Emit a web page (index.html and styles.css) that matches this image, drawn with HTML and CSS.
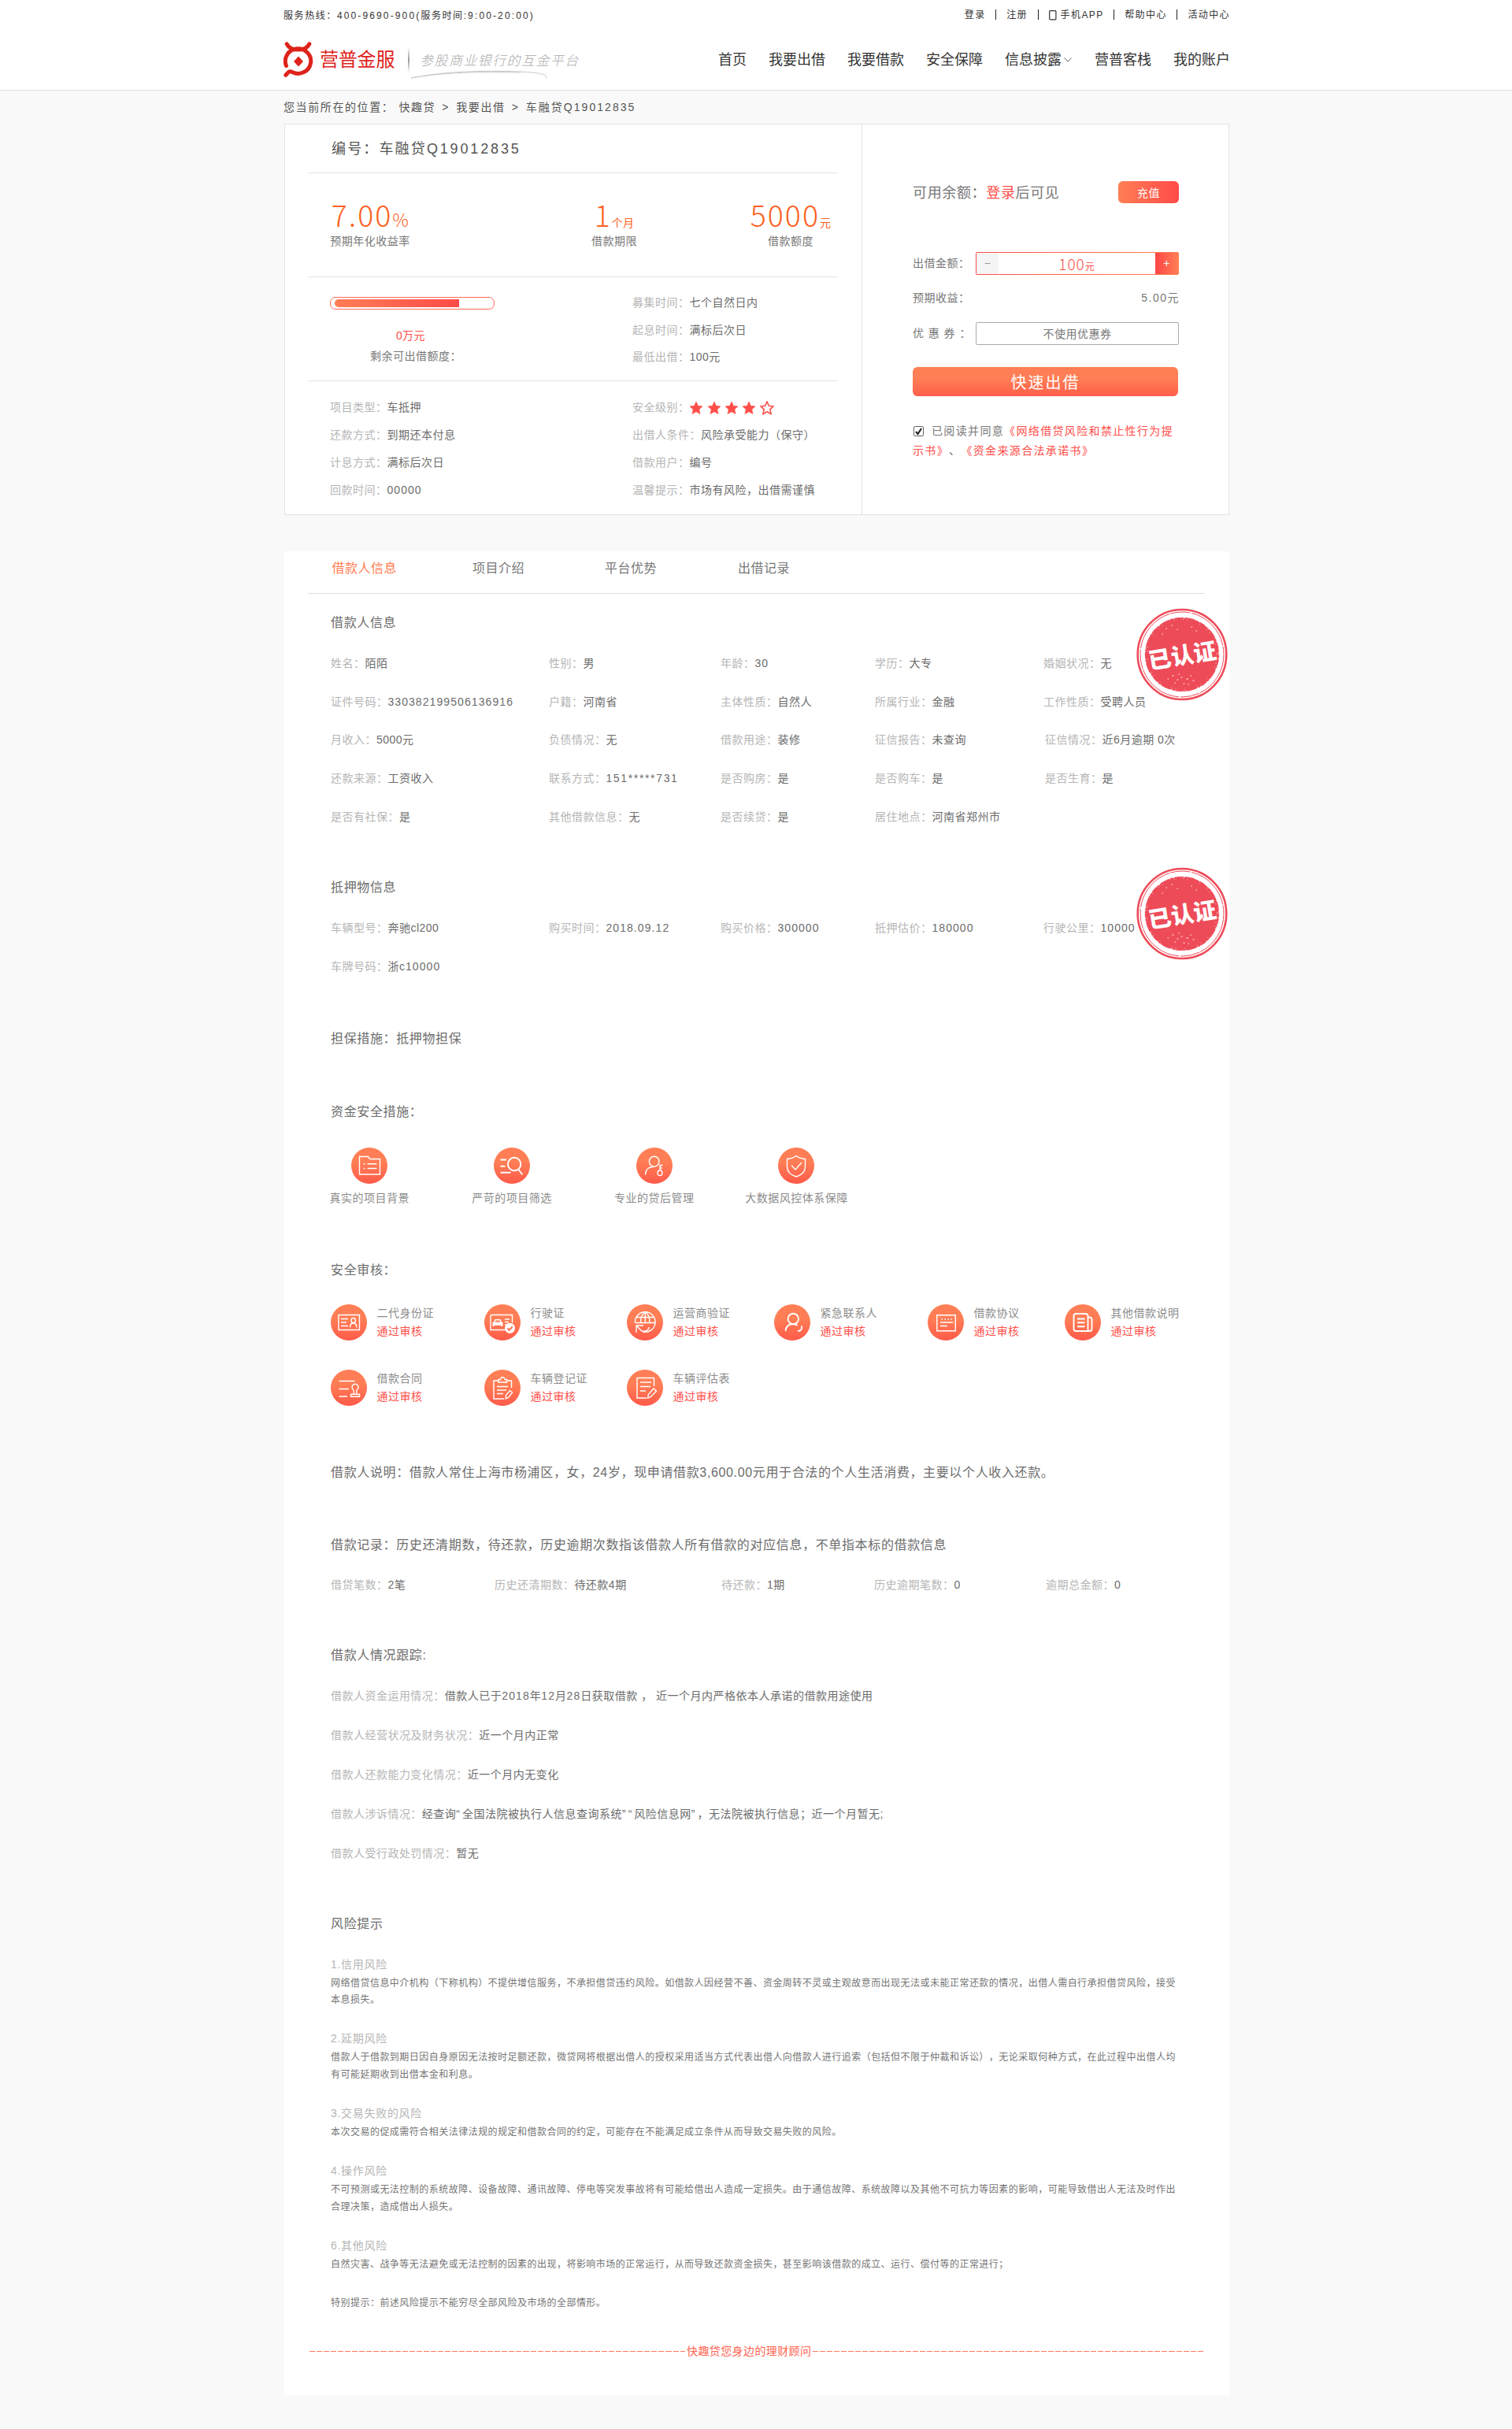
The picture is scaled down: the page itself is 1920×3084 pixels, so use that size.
FILE: index.html
```html
<!DOCTYPE html>
<html lang="zh-CN">
<head>
<meta charset="utf-8">
<title>车融贷Q19012835 - 营普金服</title>
<link rel="stylesheet" href="styles.css">
</head>
<body>
<svg class="defs" width="0" height="0" aria-hidden="true">
  <defs>
    <linearGradient id="disc" x1="0" y1="0" x2="0" y2="1"><stop offset="0.4" stop-color="#ff7e55"/><stop offset="1" stop-color="#ff5a4a"/></linearGradient>
    <symbol id="star" viewBox="0 0 18 18"><path d="M9 1l2.4 5.3 5.6.6-4.2 3.9 1.2 5.8L9 13.7l-5 2.9 1.2-5.8L1 6.9l5.6-.6z"/></symbol>
    <symbol id="stamp" viewBox="0 0 116 118">
      <ellipse cx="58" cy="59" rx="56.3" ry="57" fill="none" stroke="#ee4b59" stroke-width="2.6"/>
      <ellipse cx="58" cy="59" rx="53" ry="54" fill="none" stroke="#ee4b59" stroke-width="1" stroke-dasharray="60 1 25 2"/>
      <circle cx="58" cy="59" r="47.2" fill="#ee4b59"/>
      <g fill="none" stroke="#fff" stroke-linecap="round" stroke-width="1">
        <circle cx="58" cy="59" r="46.8" stroke-dasharray=".5 4 1 9 .5 3 2 14"/>
        <circle cx="58" cy="59" r="44.5" stroke-dasharray=".1 11 .1 5 .1 17" stroke-width=".8"/>
        <path d="M46 86h1M52 91h1M57 88h1M64 90h1.500M69 86h.5M72 92h1M49 95h.5M60 96h1M66 97h.5M40 90h.5M54 84h.5M38 26h.5M45 22h.5M52 27h.5M70 24h.5M76 29h.5M33 33h.5" stroke-width="1.100"/>
      </g>
    </symbol>
  </defs>
</svg>

<header class="header">
  <div class="wrap">
    <div class="topbar">
      <p class="hotline">服务热线：<span>400-9690-900(</span>服务时间<span>:9:00-20:00)</span></p>
      <ul class="toplinks">
        <li>登录</li><li>注册</li>
        <li><svg width="10" height="13" viewBox="0 0 10 13"><rect x=".7" y=".7" width="8.2" height="11.2" rx="1" fill="none" stroke="#333" stroke-width="1.2"/></svg>手机APP</li>
        <li>帮助中心</li><li>活动中心</li>
      </ul>
    </div>
    <div class="mainbar">
      <div class="brand">
        <svg class="logo" width="40" height="46" viewBox="0 0 40 46" fill="none" stroke="#de231b" stroke-width="5">
          <path d="M4.2 2.8C9 12.500 28 12.500 32.800 2.800" stroke-linecap="round"/>
          <path d="M2.800 42.300C6 39.500 7 36 11.500 38.800A16.200 15.800 0 1 0 3.500 30.500" stroke-linecap="round"/>
          <path d="M19 18.500l6 6.500-6 6.500-6-6.500z" fill="#de231b" stroke="none"/>
        </svg>
        <span class="brand-name">营普金服</span>
        <span class="brand-rule"></span>
        <span class="slogan">参股商业银行的互金平台
          <svg width="178" height="12" viewBox="0 0 178 12"><path d="M1 10C40 2 90 0 140 2c26 1 38 5 31 8M1 10C40 3 90 1.500 140 3" fill="none" stroke="#c9c9c9" stroke-width="1"/></svg>
        </span>
      </div>
      <nav class="nav">
        <a>首页</a><a>我要出借</a><a>我要借款</a><a>安全保障</a>
        <a>信息披露<svg width="12" height="8" viewBox="0 0 12 8"><path d="M1.500 1.500l4.500 4.500 4.500-4.500" fill="none" stroke="#666" stroke-width="1"/></svg></a>
        <a>营普客栈</a><a>我的账户</a>
      </nav>
    </div>
  </div>
</header>

<div class="wrap crumbs"><span class="here">您当前所在的位置：</span><span>快趣贷</span><i>&gt;</i><span>我要出借</span><i>&gt;</i><span>车融贷Q19012835</span></div>

<main class="page">
  <section class="card">
    <div class="loan">
      <h1>编号：车融贷<span>Q19012835</span></h1>
      <div class="stats">
        <div class="stat rate"><p class="big">7.00<small class="pct">%</small></p><p>预期年化收益率</p></div>
        <div class="stat term"><p class="big">1<small>个月</small></p><p>借款期限</p></div>
        <div class="stat sum"><p class="big">5000<small>元</small></p><p>借款额度</p></div>
      </div>
      <div class="progress">
        <div>
          <div class="bar"><div class="fill"></div></div>
          <p class="left-sum">0万元</p>
          <p class="left-label">剩余可出借额度：</p>
        </div>
        <dl>
          <div><dt>募集时间：</dt><dd>七个自然日内</dd></div>
          <div><dt>起息时间：</dt><dd>满标后次日</dd></div>
          <div><dt>最低出借：</dt><dd>100元</dd></div>
        </dl>
      </div>
      <dl class="terms">
        <div><dt>项目类型：</dt><dd>车抵押</dd></div>
        <div><dt>安全级别：</dt><dd class="stars"><svg><use href="#star"/></svg><svg><use href="#star"/></svg><svg><use href="#star"/></svg><svg><use href="#star"/></svg><svg class="empty"><use href="#star"/></svg></dd></div>
        <div><dt>还款方式：</dt><dd>到期还本付息</dd></div>
        <div><dt>出借人条件：</dt><dd>风险承受能力（保守）</dd></div>
        <div><dt>计息方式：</dt><dd>满标后次日</dd></div>
        <div><dt>借款用户：</dt><dd>编号</dd></div>
        <div><dt>回款时间：</dt><dd class="num">00000</dd></div>
        <div><dt>温馨提示：</dt><dd>市场有风险，出借需谨慎</dd></div>
      </dl>
    </div>
    <div class="invest">
      <div class="balance"><span>可用余额：<a>登录</a>后可见</span><button class="recharge">充值</button></div>
      <div class="field amount"><label>出借金额：</label>
        <div class="stepper"><span class="minus">−</span><span class="value">100<small>元</small></span><span class="plus">+</span></div></div>
      <div class="field income"><label>预期收益：</label><span>5.00元</span></div>
      <div class="field coupon"><label>优惠券：</label><div class="select">不使用优惠券</div></div>
      <button class="submit">快速出借</button>
      <p class="agree"><svg width="13" height="13" viewBox="0 0 13 13"><rect x=".5" y=".5" width="12" height="12" rx="1.500" fill="#fff" stroke="#666"/><path d="M3 7l2.500 3L10 3" fill="none" stroke="#222" stroke-width="2.200"/></svg>已阅读并同意<a>《网络借贷风险和禁止性行为提<br>示书》</a>、<a>《资金来源合法承诺书》</a></p>
    </div>
  </section>

  <section class="panel">
    <nav class="tabs"><a class="on">借款人信息</a><a>项目介绍</a><a>平台优势</a><a>出借记录</a></nav>

    <div class="block borrower">
      <h3>借款人信息</h3>
      <dl class="facts">
        <div><dt>姓名：</dt><dd>陌陌</dd></div><div><dt>性别：</dt><dd>男</dd></div><div><dt>年龄：</dt><dd class="num">30</dd></div><div><dt>学历：</dt><dd>大专</dd></div><div><dt>婚姻状况：</dt><dd>无</dd></div>
        <div><dt>证件号码：</dt><dd class="num">330382199506136916</dd></div><div><dt>户籍：</dt><dd>河南省</dd></div><div><dt>主体性质：</dt><dd>自然人</dd></div><div><dt>所属行业：</dt><dd>金融</dd></div><div><dt>工作性质：</dt><dd>受聘人员</dd></div>
        <div><dt>月收入：</dt><dd>5000元</dd></div><div><dt>负债情况：</dt><dd>无</dd></div><div><dt>借款用途：</dt><dd>装修</dd></div><div><dt>征信报告：</dt><dd>未查询</dd></div><div class="in"><dt>征信情况：</dt><dd>近6月逾期 0次</dd></div>
        <div><dt>还款来源：</dt><dd>工资收入</dd></div><div><dt>联系方式：</dt><dd class="phone">151*****731</dd></div><div><dt>是否购房：</dt><dd>是</dd></div><div><dt>是否购车：</dt><dd>是</dd></div><div class="in"><dt>是否生育：</dt><dd>是</dd></div>
        <div><dt>是否有社保：</dt><dd>是</dd></div><div><dt>其他借款信息：</dt><dd>无</dd></div><div><dt>是否续贷：</dt><dd>是</dd></div><div><dt>居住地点：</dt><dd>河南省郑州市</dd></div>
      </dl>
      <div class="stamp"><svg width="116" height="118"><use href="#stamp"/></svg><b>已认证</b></div>
    </div>

    <div class="block pledge">
      <h3>抵押物信息</h3>
      <dl class="facts">
        <div><dt>车辆型号：</dt><dd>奔驰cl200</dd></div><div><dt>购买时间：</dt><dd class="num">2018.09.12</dd></div><div><dt>购买价格：</dt><dd class="num">300000</dd></div><div><dt>抵押估价：</dt><dd class="num">180000</dd></div><div><dt>行驶公里：</dt><dd class="num">10000</dd></div>
        <div><dt>车牌号码：</dt><dd>浙<span class="num">c10000</span></dd></div>
      </dl>
      <div class="stamp"><svg width="116" height="118"><use href="#stamp"/></svg><b>已认证</b></div>
    </div>

    <div class="block guarantee"><h3>担保措施：抵押物担保</h3></div>

    <div class="block measures">
      <h3>资金安全措施：</h3>
      <ul>
        <li><svg class="ico" viewBox="0 0 46 46"><circle cx="23" cy="23" r="23"/><path d="M10.500 11.500h11l2 3h13v19.500h-26zM20.500 20.700h12M20.500 26.500h12M15.500 20.700h2M15.500 26.500h2"/></svg>真实的项目背景</li>
        <li><svg class="ico bold" viewBox="0 0 46 46"><circle cx="23" cy="23" r="23"/><path d="M31 27.500l5.500 7M8.500 15.500h7.500M8.500 23.700h6M8.500 31.700h13M34.300 21a8.200 8.200 0 1 1-16.400 0a8.200 8.200 0 0 1 16.400 0z"/></svg>严苛的项目筛选</li>
        <li><svg class="ico" viewBox="0 0 46 46"><circle cx="23" cy="23" r="23"/><path d="M29 17.700a6.300 6.500 0 1 1-12.600 0a6.300 6.500 0 0 1 12.600 0zM11.500 34.500c0-6 4-10 11-10.200M30 29v-6.500h3.500M30 26h3M33 32.300a3 3.300 0 1 1-6 0a3 3.300 0 0 1 6 0z"/></svg>专业的贷后管理</li>
        <li><svg class="ico" viewBox="0 0 46 46"><circle cx="23" cy="23" r="23"/><path d="M23 10.500c3 2.500 7 3.600 11.500 4v9.500c0 6.500-5 11-11.500 13-6.500-2-11.500-6.500-11.500-13v-9.500c4.500-.4 8.500-1.500 11.500-4zM17 22.500l5 5.500 8-9"/></svg>大数据风控体系保障</li>
      </ul>
    </div>

    <div class="block audit">
      <h3>安全审核：</h3>
      <ul>
        <li><svg class="ico" viewBox="0 0 46 46"><circle cx="23" cy="23" r="23"/><path d="M10 13.500h26.500v19h-26.500zM13 18.500h9M13 23h7M13 27.500h9M31.500 20.500a2.800 3 0 1 1-5.600 0a2.800 3 0 0 1 5.600 0zM24.500 29.500c0-3.500 1.500-5.500 4.200-5.500s4.200 2 4.200 5.500"/></svg><p>二代身份证<em>通过审核</em></p></li>
        <li><svg class="ico" viewBox="0 0 46 46"><circle cx="23" cy="23" r="23"/><path d="M8 13.500h27.500v10M27 32.500h-19v-19M26 19h6M26 22.500h5M26 26h3"/><path class="solid" d="M13.500 19h7l1.500 3.500 1.500.8v4.700h-2v-1.300h-9v1.300h-2v-4.700l1.500-.8z"/><path class="cut" d="M14.500 20.500h5l.8 2h-6.600z"/><circle class="solid" cx="32.500" cy="30.300" r="6.500"/><path class="tick" d="M29.500 30.500l2.200 2.300 4-4.500"/></svg><p>行驶证<em>通过审核</em></p></li>
        <li><svg class="ico" viewBox="0 0 46 46"><circle cx="23" cy="23" r="23"/><path d="M10.500 23.500a12.800 12.800 0 1 1 10 11.500M11 16.500h24.500M10.500 23.500h26M23.300 9.500v14M23.300 9.500c-5 4-6 9-5.700 14M23.300 9.500c5 4 6 9 5.500 14M12 36v-9h9M12.500 27.500l6.500 6.500c5 1 9-1 9-5"/></svg><p>运营商验证<em>通过审核</em></p></li>
        <li><svg class="ico bold" viewBox="0 0 46 46"><circle cx="23" cy="23" r="23"/><path d="M31 18.500a6.700 6.700 0 1 1-13.400 0a6.700 6.700 0 0 1 13.400 0zM14.500 34c.5-5.500 4-9 9.800-9 2.500 0 4 .8 5.200 2M35 27.500v3q-.500 3.500-5 3.500"/></svg><p>紧急联系人<em>通过审核</em></p></li>
        <li><svg class="ico" viewBox="0 0 46 46"><circle cx="23" cy="23" r="23"/><path d="M11.800 13.700h23.500v20h-23.500zM16 23h16.500M16 27.500h9M17.500 19h1.500M21.500 19h1.500M25.500 19h1.500M29.300 19h1.500"/></svg><p>借款协议<em>通过审核</em></p></li>
        <li><svg class="ico bold" viewBox="0 0 46 46"><circle cx="23" cy="23" r="23"/><path d="M14.500 12h12q3 0 3 3v19h-15q-3 0-3-3v-16q0-3 3-3zM29.500 16.500h2q3 0 3 3v11.500q0 3-3 3h-2M16 18.500h9.500M16 23.300h9.500M16 28.300h9.500"/></svg><p>其他借款说明<em>通过审核</em></p></li>
        <li><svg class="ico" viewBox="0 0 46 46"><circle cx="23" cy="23" r="23"/><path d="M10.500 14.500h20M10.500 24.500h12.500M10.500 34h10.500M25.500 34.300h11v-3h-11zM29 31c1-3 .5-4-.3-5.500a4 4 0 1 1 4.600 0c-.8 1.500-1.300 2.500-.3 5.500"/></svg><p>借款合同<em>通过审核</em></p></li>
        <li><svg class="ico" viewBox="0 0 46 46"><circle cx="23" cy="23" r="23"/><path d="M18 14h-6v23h13M28.500 14h6v9M18 16v-3.500h2.500c.5-4 5-4 5.500 0h2.500v3.500zM16 21.500h14M16 26h12M16 30.500h8M27 37l.5-4.500 5-6 3 2.500-5 6.500z"/></svg><p>车辆登记证<em>通过审核</em></p></li>
        <li><svg class="ico" viewBox="0 0 46 46"><circle cx="23" cy="23" r="23"/><path d="M34.500 21v-10.500h-21.500v25.500h12M17 16h14M17 21.500h13M17 27h7M26.500 36l.8-4.500 6.700-7.500 3.500 3-7 7.500z"/></svg><p>车辆评估表<em>通过审核</em></p></li>
      </ul>
    </div>

    <div class="block note"><h3>借款人说明：借款人常住上海市杨浦区，女，24岁，现申请借款3,600.00元用于合法的个人生活消费，主要以个人收入还款。</h3></div>

    <div class="block record">
      <h3>借款记录：历史还清期数，待还款，历史逾期次数指该借款人所有借款的对应信息，不单指本标的借款信息</h3>
      <dl>
        <div><dt>借贷笔数：</dt><dd>2笔</dd></div><div><dt>历史还清期数：</dt><dd>待还款4期</dd></div><div><dt>待还款：</dt><dd>1期</dd></div><div><dt>历史逾期笔数：</dt><dd>0</dd></div><div><dt>逾期总金额：</dt><dd>0</dd></div>
      </dl>
    </div>

    <div class="block track">
      <h3>借款人情况跟踪:</h3>
      <dl>
        <div><dt>借款人资金运用情况：</dt><dd class="first">借款人已于<span class="num">2018</span>年<span class="num">12</span>月<span class="num">28</span>日获取借款 ， 近一个月内严格依本人承诺的借款用途使用</dd></div>
        <div><dt>借款人经营状况及财务状况：</dt><dd>近一个月内正常</dd></div>
        <div><dt>借款人还款能力变化情况：</dt><dd>近一个月内无变化</dd></div>
        <div><dt>借款人涉诉情况：</dt><dd>经查询<q>“</q>全国法院被执行人信息查询系统<q>”“</q>风险信息网<q>”</q>，无法院被执行信息；近一个月暂无;</dd></div>
        <div><dt>借款人受行政处罚情况：</dt><dd>暂无</dd></div>
      </dl>
    </div>

    <div class="block risk">
      <h3>风险提示</h3>
      <h4>1.信用风险</h4>
      <p>网络借贷信息中介机构（下称机构）不提供增信服务，不承担借贷违约风险。如借款人因经营不善、资金周转不灵或主观故意而出现无法或未能正常还款的情况，出借人需自行承担借贷风险，接受<br>本息损失。</p>
      <h4>2.延期风险</h4>
      <p>借款人于借款到期日因自身原因无法按时足额还款，微贷网将根据出借人的授权采用适当方式代表出借人向借款人进行追索（包括但不限于仲裁和诉讼），无论采取何种方式，在此过程中出借人均<br>有可能延期收到出借本金和利息。</p>
      <h4>3.交易失败的风险</h4>
      <p>本次交易的促成需符合相关法律法规的规定和借款合同的约定，可能存在不能满足成立条件从而导致交易失败的风险。</p>
      <h4>4.操作风险</h4>
      <p>不可预测或无法控制的系统故障、设备故障、通讯故障、停电等突发事故将有可能给借出人造成一定损失。由于通信故障、系统故障以及其他不可抗力等因素的影响，可能导致借出人无法及时作出<br>合理决策，造成借出人损失。</p>
      <h4>6.其他风险</h4>
      <p>自然灾害、战争等无法避免或无法控制的因素的出现，将影响市场的正常运行，从而导致还款资金损失，甚至影响该借款的成立、运行、偿付等的正常进行；</p>
      <p class="special">特别提示：前述风险提示不能穷尽全部风险及市场的全部情形。</p>
    </div>

    <div class="signoff"><i></i><span>快趣贷您身边的理财顾问</span><i></i></div>
  </section>
</main>
</body>
</html>
```

FILE: styles.css
```css
* { box-sizing: border-box; margin: 0; padding: 0; }

body {
  background: #f9f9f9;
  color: #777;
  font: 14px/20px "Liberation Sans", "Noto Sans CJK SC", sans-serif;
  letter-spacing: .5px;
  text-spacing-trim: space-all;
  min-height: 3084px;
  white-space: nowrap;
}
ul { list-style: none; }
em, i { font-style: normal; }
q { quotes: none; letter-spacing: 3px; }
svg { display: block; flex: none; }
button { border: 0; font-family: inherit; color: #fff; }
.defs { position: absolute; }
.wrap { width: 1200px; margin: 0 auto; }

/* header */
.header { height: 115px; background: #fff; border-bottom: 1px solid #dcdcdc; color: #333; }
.topbar { display: flex; justify-content: space-between; height: 39px; line-height: 40px; font-size: 12px; letter-spacing: 1.4px; }
.hotline { letter-spacing: 1.58px; }
.hotline span { letter-spacing: 2.130px; }
.toplinks { display: flex; height: 38px; margin-right: -2px; line-height: 38px; }
.toplinks li { display: flex; align-items: center; gap: 5px; position: relative; margin-left: 26.600px; }
.toplinks li + li::before { content: ""; position: absolute; left: -14px; top: 12px; width: 1px; height: 13px; background: #222; }
.mainbar { display: flex; justify-content: space-between; height: 73px; }
.brand { display: flex; align-items: center; height: 73px; }
.brand-name { margin-left: 6px; font-size: 24px; letter-spacing: -.2px; color: #de231b; }
.brand-rule { width: 2px; height: 32px; margin-left: 17px; background: linear-gradient(#fff, #999 50%, #fff); }
.slogan { position: relative; margin-left: 13px; font: italic 300 17px/24px "Noto Sans CJK SC", sans-serif; letter-spacing: 1.4px; color: #aaa; }
.slogan svg { position: absolute; left: -12px; top: 25px; }
.nav { display: flex; gap: 28px; height: 73px; margin-right: -2px; line-height: 72px; font-size: 18px; letter-spacing: 0; }
.nav a { display: flex; align-items: center; gap: 2px; }

.crumbs { display: flex; height: 42px; line-height: 43px; color: #555; letter-spacing: 1.6px; }
.crumbs .here { margin-right: 6px; }
.crumbs i { width: 26px; padding-left: 8px; }
.crumbs span:last-child { letter-spacing: 2.050px; }

.page { width: 1200px; margin-left: 361px; }

/* loan summary */
.card { display: grid; grid-template-columns: 733px 1fr; height: 497px; background: #fff; border: 1px solid #e3e3e3; }
.loan { padding: 0 31px 0 30px; border-right: 1px solid #e3e3e3; }
.loan h1 { height: 62px; padding-left: 29px; border-bottom: 1px solid #e3e3e3; font-size: 18px; font-weight: 400; line-height: 62px; letter-spacing: 2.150px; color: #555; }
.loan h1 span { letter-spacing: 2.850px; }
.stats { display: flex; height: 132px; padding: 30px 0 0 27px; border-bottom: 1px solid #e3e3e3; text-align: center; line-height: 22px; }
.rate { width: 102px; }
.term { width: 80px; margin-left: 219px; }
.sum { width: 110px; margin-left: 129px; }
.big { height: 45px; font: 300 37.500px/44px "Noto Sans CJK SC", sans-serif; letter-spacing: 2px; color: #fd6123; }
.big small { font-size: 14px; font-weight: 400; line-height: 1; letter-spacing: .3px; }
.big .pct { font-size: 23px; font-weight: 300; }
.progress { display: grid; grid-template-columns: 384px 1fr; height: 132px; padding-left: 27px; border-bottom: 1px solid #e3e3e3; }
.bar { width: 209px; height: 16px; margin-top: 25px; padding: 2px 5px; border: 1px solid #ff6a52; border-radius: 7px; }
.fill { width: 158px; height: 10px; border-radius: 5px 0 0 5px; background: linear-gradient(90deg, #ff7e55, #ff4b48); }
.left-sum { margin: 23px 0 6px 84px; color: #ff4e48; letter-spacing: .3px; }
.left-label { padding-left: 51px; }
.progress dl { padding-top: 15px; }
.progress dl div { height: 34.700px; line-height: 34.700px; }
dl div { display: flex; }
dt { color: #b5b5b5; letter-spacing: .48px; }
dd { color: #6c6c6c; }
.terms { display: grid; grid-template-columns: 384px 1fr; grid-auto-rows: 35px; padding: 16px 0 0 27px; line-height: 35px; }
.stars { display: flex; align-items: center; gap: 4.300px; }
.stars svg { width: 18px; height: 18px; fill: #ff4e48; stroke: #ff4e48; stroke-width: .6; }
.stars .empty { fill: none; stroke-width: 1.600; }

/* lending form */
.invest { width: 403px; padding: 72px 0 0 64px; }
.balance { display: flex; justify-content: space-between; width: 338px; font-size: 18px; line-height: 30px; letter-spacing: .65px; }
.invest a { color: #ff4e48; }
.recharge { width: 77px; height: 28px; border-radius: 6px; background: linear-gradient(90deg, #ff7e55, #ff4b48); font-size: 14px; letter-spacing: .5px; }
.field { display: flex; justify-content: space-between; width: 338px; }
.amount { margin-top: 60px; line-height: 29px; }
.stepper { display: flex; width: 258px; height: 29px; border: 1px solid transparent; border-radius: 2px; background: linear-gradient(#fff, #fff) padding-box, linear-gradient(90deg, #ff4b48, #ff7e55) border-box; line-height: 27px; text-align: center; }
.minus { width: 28px; background: #f5f5f5; color: #999; }
.value { flex: 1; font: 300 19px/27px "Noto Sans CJK SC", sans-serif; letter-spacing: 1px; color: #ff4e48; }
.value small { font-size: 12px; font-weight: 400; line-height: 1; }
.plus { width: 29px; background: linear-gradient(90deg, #ff4545, #ff7e55); color: #fff; }
.income { margin-top: 19px; }
.income span { letter-spacing: 1.500px; margin-right: -1px; }
.coupon { margin-top: 21px; line-height: 29px; }
.coupon label { letter-spacing: 5.800px; }
.select { width: 258px; height: 29px; border: 1px solid #aaa; border-radius: 2px; text-align: center; line-height: 28px; }
.submit { display: block; width: 337px; height: 37px; margin-top: 28px; border-radius: 6px; background: linear-gradient(#ff7e55 40%, #ff5e4a); font-size: 20px; letter-spacing: 2px; }
.agree { margin-top: 32px; line-height: 25px; letter-spacing: 1.350px; }
.agree svg { display: inline-block; margin: 0 10px 0 1px; vertical-align: -1.500px; }

/* detail panel */
.panel { height: 2341px; margin-top: 46px; background: #fff; }
.tabs { position: relative; display: grid; grid-template-columns: 178.500px 168px 169px auto; height: 54px; margin: 0 31px; padding-left: 29.500px; border-bottom: 1px solid #e0e0e0; font-size: 16px; line-height: 44px; }
.tabs .on { color: #ff7a50; }
.block { position: relative; padding-left: 59px; }
h3 { margin-bottom: -1px; padding-top: 1px; font-size: 16px; font-weight: 400; line-height: 24px; letter-spacing: .64px; color: #6c6c6c; }
.borrower { padding-top: 24px; }
.facts { display: grid; grid-template-columns: 277px 218px 196px 214px auto; grid-auto-rows: 48.700px; margin-top: 16px; line-height: 48.700px; }
.facts .in { padding-left: 2px; }
.num { letter-spacing: 1.080px; }
.phone { letter-spacing: 1.650px; }
.stamp { position: absolute; left: 1082px; top: 18px; width: 116px; height: 118px; }
.stamp b { position: absolute; left: 0; top: 37px; width: 116px; text-align: center; font: 900 29px/42px "Noto Sans CJK SC", sans-serif; letter-spacing: 0; color: #fff; transform: rotate(-9deg); }
.pledge { margin-top: 53px; }
.pledge .stamp { top: -13px; }
.guarantee { margin-top: 54px; }
.measures { margin-top: 69px; }
.measures ul { display: grid; grid-template-columns: repeat(4, 180.700px); margin: 34px 0 0 -41px; }
.measures li { display: flex; flex-direction: column; align-items: center; gap: 8px; color: #8c8c8c; }
.ico { width: 46px; height: 46px; fill: none; stroke: #fff; stroke-width: 1.400; }
.ico.bold { stroke-width: 1.900; }
.ico circle:first-child { fill: url(#disc); stroke: none; }
.ico .solid { fill: #fff; stroke: none; }
.ico .cut { fill: #ff7450; stroke: none; }
.ico .tick { stroke: #ff6a4e; stroke-width: 2; }
.audit { margin-top: 69px; }
.audit ul { display: grid; grid-template-columns: 195px 181px 187px 195px 174px auto; row-gap: 37px; margin-top: 32px; }
.audit li { display: flex; gap: 12.500px; height: 46px; padding-top: 0; line-height: 23.500px; color: #8c8c8c; }
.audit em { display: block; color: #ff4e48; }
.note { margin-top: 72px; }
.record { margin-top: 68px; }
.record dl { display: grid; grid-template-columns: 208px 288px 194px 218px auto; margin-top: 29px; }
.track { margin-top: 67px; }
.track dl { margin-top: 15px; line-height: 50px; }
.risk { margin-top: 52px; }
.risk h3 + h4 { margin-top: 30px; }
h4 { margin-top: 28px; font-size: 14px; font-weight: 400; letter-spacing: .7px; color: #b5b5b5; }
.risk p { margin-top: 4px; font-size: 12px; line-height: 21.300px; letter-spacing: .475px; color: #757575; }
.risk .special { margin-top: 28px; }
.signoff { display: grid; grid-template-columns: 477px auto 1fr; align-items: center; margin: 40px 33px 0 32px; color: #ff6350; letter-spacing: .4px; }
.signoff i { height: 1px; background: repeating-linear-gradient(90deg, #ff7a60 0 7px, transparent 7px 9.050px); }
.signoff span { padding: 0 2px; }
```
